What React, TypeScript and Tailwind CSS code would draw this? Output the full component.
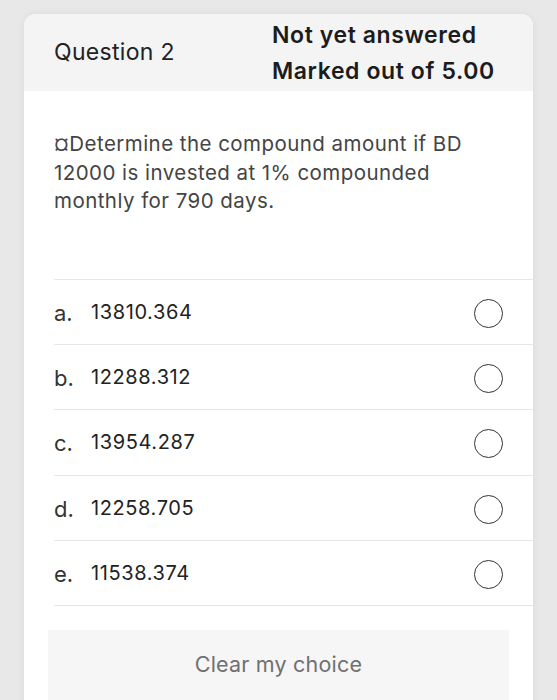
export default function App() {
  const options = [
    { letter: "a.", value: "13810.364" },
    { letter: "b.", value: "12288.312" },
    { letter: "c.", value: "13954.287" },
    { letter: "d.", value: "12258.705" },
    { letter: "e.", value: "11538.374" },
  ];

  return (
    <div className="h-[700px] overflow-hidden bg-[#e8e8e8] pl-[24px] pr-[24px] pt-[14px] font-['Inter',sans-serif]">
      <div className="min-h-[720px] rounded-t-[12px] bg-white shadow-[0_0_8px_rgba(0,0,0,0.06)]">
        <div className="flex h-[77px] items-center rounded-t-[12px] bg-[#f4f4f4] pl-[30px]">
          <span className="w-[218px] text-[23px] tracking-[0.3px] text-[#222]">Question 2</span>
          <div className="text-[23px] font-semibold leading-[36px] tracking-[0.6px] text-[#1c1c1c]">
            <p>Not yet answered</p>
            <p>Marked out of 5.00</p>
          </div>
        </div>

        <div className="px-[30px] pt-[39px] pb-[63px]">
          <p className="w-[440px] text-[20.5px] leading-[28.5px] tracking-[0.45px] text-[#444]">
            ¤Determine the compound amount if BD 12000 is invested at 1%
            compounded monthly for 790 days.
          </p>
        </div>

        <div className="ml-[30px]">
          {options.map((o) => (
            <div
              className="flex h-[65.4px] items-center border-t border-[#e6e6e6]"
              key={o.letter}
            >
              <span className="w-[37px] pt-[3px] text-[22px] text-[#333]">{o.letter}</span>
              <span className="flex-1 text-[20px] tracking-[0.6px] text-[#222]">{o.value}</span>
              <span className="mr-[30px] mt-[3px] size-[29px] rounded-full border-[1.5px] border-[#333]" />
            </div>
          ))}
          <div className="border-t border-[#e6e6e6]" />
        </div>

        <div className="px-[24px] pt-[24px]">
          <button
            className="flex h-[80px] w-full justify-center bg-[#f6f6f6] pt-[18px] text-[21.5px] tracking-[0.2px] text-[#707070]"
            type="button"
          >
            Clear my choice
          </button>
        </div>
      </div>
    </div>
  );
}
